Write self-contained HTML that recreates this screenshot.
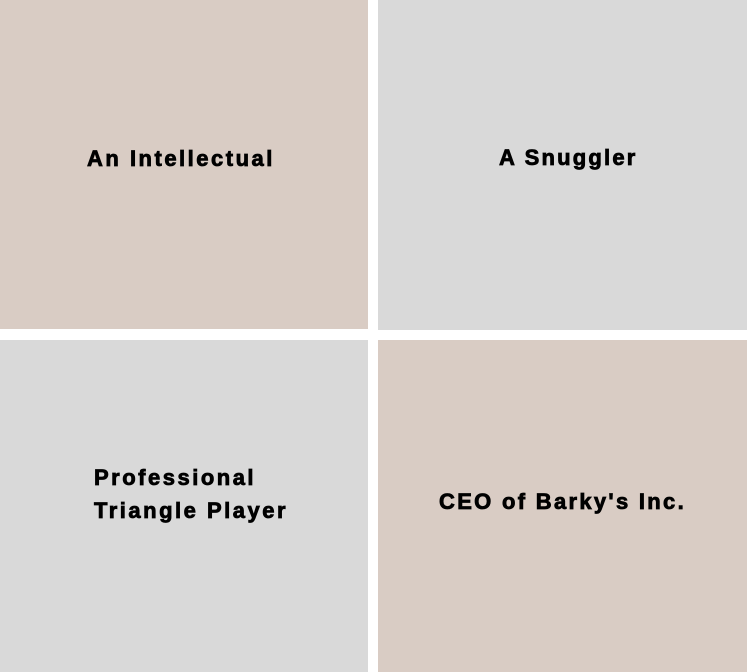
<!DOCTYPE html>
<html><head><style>
html,body{margin:0;padding:0;background:#fff;width:747px;height:672px;overflow:hidden}
.b{position:absolute;font-family:"Liberation Sans",Arial,sans-serif;font-weight:bold;font-size:22px;letter-spacing:2.5px;color:#000;-webkit-text-stroke:0.8px #000}
.b span{position:absolute;white-space:nowrap;line-height:33px}
.beige{background:#d9ccc4}.grey{background:#d9d9d9}
</style></head><body>
<div class="b beige" style="left:0;top:0;width:368px;height:329px"><span style="left:87px;top:142px">An Intellectual</span></div>
<div class="b grey" style="left:378px;top:0;width:369px;height:330px"><span style="left:121px;top:141px;letter-spacing:2.2px">A Snuggler</span></div>
<div class="b grey" style="left:0;top:340px;width:368px;height:332px"><span style="left:94px;top:121px">Professional<br>Triangle Player</span></div>
<div class="b beige" style="left:378px;top:340px;width:369px;height:332px"><span style="left:61px;top:145px;letter-spacing:2.3px">CEO of Barky's Inc.</span></div>
</body></html>
